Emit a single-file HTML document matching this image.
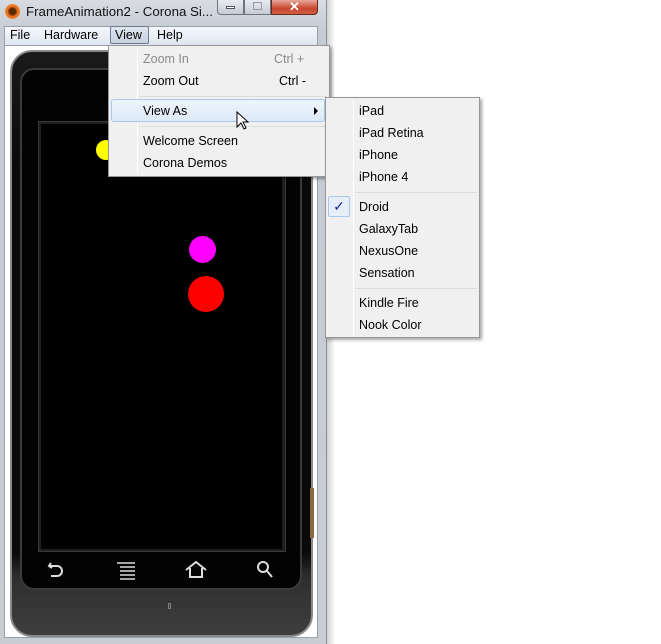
<!DOCTYPE html>
<html><head><meta charset="utf-8"><style>
*{margin:0;padding:0;box-sizing:border-box}
body{width:661px;height:644px;background:#fff;position:relative;overflow:hidden;font-family:"Liberation Sans",sans-serif;font-size:12.5px;color:#000}
.abs{position:absolute}
#win{left:0;top:0;width:327px;height:644px;background:linear-gradient(#d8dce2,#c6ccd4 30px,#c9cdd2);border-right:1px solid #8a8f96}
#shadow{left:327px;top:0;width:8px;height:644px;background:linear-gradient(90deg,rgba(0,0,0,.18),rgba(0,0,0,0))}
#client{left:4px;top:45px;width:314px;height:593px;background:#fff;border:1px solid #9aa0a8}
#menubar{left:4px;top:26px;width:314px;height:19px;background:linear-gradient(#f4f7fc,#dfe6f1);border:1px solid #9aa0a8;border-bottom:none}
.mi{position:absolute;top:28px;font-size:12.5px}
.menu{background:#f0f0f0;border:1px solid #979797;box-shadow:2px 2px 3px rgba(0,0,0,.35)}
.it{position:absolute;font-size:12.5px}
</style></head><body>
<div id="win" class="abs"></div>
<div id="shadow" class="abs"></div>
<div class="abs" style="left:5px;top:4px;width:15px;height:15px;border-radius:50%;background:radial-gradient(circle,#5a2a00 30%,#e0651a 45%,#f08a30 70%,#b84a10)"></div>
<div class="abs" style="left:26px;top:4px;font-size:13.3px;color:#111">FrameAnimation2 - Corona Si...</div>
<div class="abs" style="left:217px;top:0;width:27px;height:15px;border:1px solid #6d7580;border-top:none;border-radius:0 0 0 4px;background:linear-gradient(#e8ecf1,#c5ccd6)"><div class="abs" style="left:8px;top:6px;width:9px;height:3px;background:#fff;border:1px solid #555"></div></div>
<div class="abs" style="left:244px;top:0;width:27px;height:15px;border:1px solid #6d7580;border-top:none;background:linear-gradient(#e8ecf1,#c5ccd6)"><div class="abs" style="left:8px;top:2px;width:9px;height:8px;border:1px solid #999"></div></div>
<div class="abs" style="left:271px;top:0;width:47px;height:15px;border:1px solid #6a2a20;border-top:none;border-radius:0 0 4px 0;background:linear-gradient(#e8a79a,#c8452f 60%,#d06040);color:#fff;font-weight:bold;text-align:center;font-size:13px;line-height:13px">✕</div>
<div id="menubar" class="abs"></div>
<div id="client" class="abs"></div>
<div class="mi" style="left:10px">File</div>
<div class="mi" style="left:44px">Hardware</div>
<div class="abs" style="left:110px;top:26px;width:39px;height:18px;border:1px solid #6f7a8a;border-radius:2px;background:linear-gradient(#dfe6f0,#c8d2e0)"></div>
<div class="mi" style="left:115px">View</div>
<div class="mi" style="left:157px">Help</div>
<!-- phone -->
<div class="abs" style="left:10px;top:50px;width:303px;height:587px;border-radius:22px;background:linear-gradient(#1a1a1a,#0a0a0a 20%,#0a0a0a 86%,#2e2e2e 90%,#3e3e3e);border:2px solid #8a8a8a"></div>
<div class="abs" style="left:20px;top:68px;width:282px;height:522px;border-radius:14px;background:#030303;border:2px solid #3a3a3a"></div>
<div class="abs" style="left:38px;top:121px;width:248px;height:431px;background:#1e1e1e;border:1px solid #3a3a3a"></div>
<div class="abs" style="left:41px;top:124px;width:241px;height:425px;background:#000"></div>
<div class="abs" style="left:310px;top:488px;width:4px;height:50px;background:#8a6a40"></div>
<div class="abs" style="left:96px;top:140px;width:20px;height:20px;border-radius:50%;background:#ff0"></div>
<div class="abs" style="left:189px;top:236px;width:27px;height:27px;border-radius:50%;background:#f0f"></div>
<div class="abs" style="left:188px;top:276px;width:36px;height:36px;border-radius:50%;background:#f00"></div>
<svg class="abs" style="left:40px;top:556px" width="250" height="30" fill="none" stroke="#ddd" stroke-width="2">
<path d="M11 7 L9 10 L12 12 M9 10 H17 A5 5 0 0 1 17 20 H11"/>
<path d="M77 7h18M80 11h15M80 15h15M80 19h15M80 23h15" stroke-width="1.6"/>
<path d="M146 14 L156 6 L166 14 M150 12 V21 H162 V12"/>
<circle cx="223" cy="11" r="5"/><path d="M227 15 L232 21"/>
</svg>
<div class="abs" style="left:168px;top:603px;width:3px;height:6px;border:1px solid #888;border-radius:1px"></div>
<!-- view menu -->
<div class="abs menu" style="left:108px;top:45px;width:222px;height:132px"></div>
<div class="abs" style="left:137px;top:48px;width:1px;height:126px;background:#ddd;border-right:1px solid #fff"></div>
<div class="it" style="left:143px;top:52px;color:#8a8a8a">Zoom In</div>
<div class="it" style="left:274px;top:52px;color:#8a8a8a">Ctrl +</div>
<div class="it" style="left:143px;top:74px">Zoom Out</div>
<div class="it" style="left:279px;top:74px">Ctrl -</div>
<div class="abs" style="left:139px;top:96px;width:188px;height:1px;background:#dcdcdc"></div>
<div class="abs" style="left:111px;top:99px;width:214px;height:23px;border:1px solid #a8c8ec;border-radius:3px;background:linear-gradient(#eef4fb,#dde9f7)"></div>
<div class="it" style="left:143px;top:104px">View As</div>
<div class="abs" style="left:314px;top:107px;width:0;height:0;border-left:4px solid #000;border-top:4px solid transparent;border-bottom:4px solid transparent"></div>
<div class="abs" style="left:139px;top:126px;width:188px;height:1px;background:#dcdcdc"></div>
<div class="it" style="left:143px;top:134px">Welcome Screen</div>
<div class="it" style="left:143px;top:156px">Corona Demos</div>
<svg class="abs" style="left:236px;top:111px" width="14" height="20"><path d="M1 1 V16 L5 12 L8 18 L10 17 L7 11 L12 11 Z" fill="#fff" stroke="#000"/></svg>
<!-- submenu -->
<div class="abs menu" style="left:325px;top:97px;width:155px;height:241px"></div>
<div class="abs" style="left:353px;top:100px;width:1px;height:235px;background:#ddd;border-right:1px solid #fff"></div>
<div class="it" style="left:359px;top:104px">iPad</div>
<div class="it" style="left:359px;top:126px">iPad Retina</div>
<div class="it" style="left:359px;top:148px">iPhone</div>
<div class="it" style="left:359px;top:170px">iPhone 4</div>
<div class="abs" style="left:355px;top:192px;width:122px;height:1px;background:#dcdcdc"></div>
<div class="abs" style="left:328px;top:196px;width:22px;height:21px;border:1px solid #a8c8ec;border-radius:2px;background:#e6eef9;color:#1a2a9a;text-align:center;font-size:14px;line-height:19px">✓</div>
<div class="it" style="left:359px;top:200px">Droid</div>
<div class="it" style="left:359px;top:222px">GalaxyTab</div>
<div class="it" style="left:359px;top:244px">NexusOne</div>
<div class="it" style="left:359px;top:266px">Sensation</div>
<div class="abs" style="left:355px;top:288px;width:122px;height:1px;background:#dcdcdc"></div>
<div class="it" style="left:359px;top:296px">Kindle Fire</div>
<div class="it" style="left:359px;top:318px">Nook Color</div>
</body></html>
